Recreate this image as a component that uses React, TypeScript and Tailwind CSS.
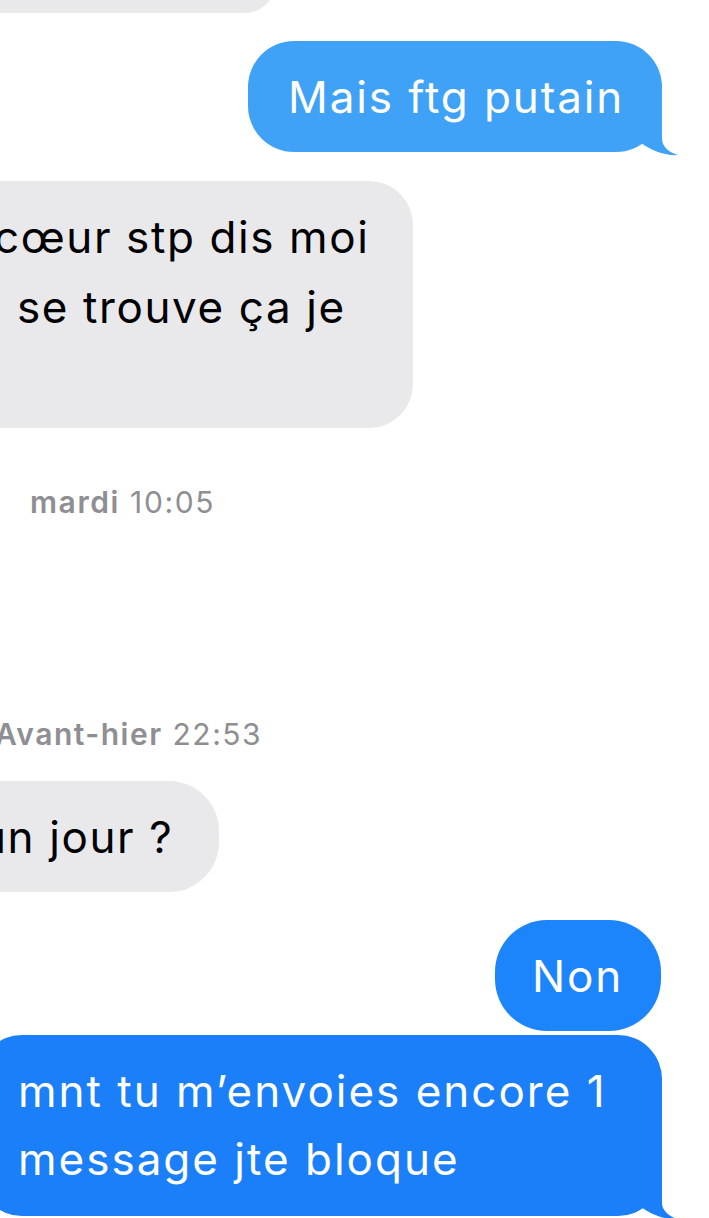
function Tail({ color }: { color: string }) {
  return (
    <svg
      className="absolute right-[-18px] bottom-[-5px]"
      width="60"
      height="62"
      viewBox="0 0 60 62"
    >
      <path
        d="M15 5 L42 5 L42 44 C42 52 50 58 58 60 C48 61 32 57 20 47 L15 40 Z"
        fill={color}
      />
    </svg>
  );
}

export default function App() {
  return (
    <div
      className="w-[709px] h-[1218px] overflow-hidden bg-white flex flex-col"
      style={{ fontFamily: 'Inter, "Noto Sans", sans-serif' }}
    >
      {/* bottom of an earlier received bubble */}
      <div className="h-[60px] -mt-[47px] w-[315px] -ml-[40px] rounded-[44px] bg-[#e9e9eb] shrink-0" />

      {/* sent */}
      <div className="self-end mr-[47px] mt-[28px] relative shrink-0">
        <div className="w-[414px] h-[111px] rounded-[46px] bg-[#3fa2f7] flex items-center pl-[40px] text-white text-[44px] leading-none tracking-[1.9px]">
          Mais ftg putain
        </div>
        <Tail color="#3fa2f7" />
      </div>

      {/* received */}
      <div className="mt-[29px] -ml-[60px] w-[473px] h-[247px] rounded-[44px] bg-[#e9e9eb] pt-[21px] text-black text-[44px] leading-[70px] tracking-[1.6px] shrink-0">
        <div className="pl-[54px]">cœur stp dis moi</div>
        <div className="pl-[77px]">se trouve ça je</div>
      </div>

      <div className="mt-[56px] pl-[30px] text-[30px] leading-[36px] text-[#8e8e93] tracking-[1.6px]">
        <span className="font-semibold">mardi</span> 10:05
      </div>

      <div className="mt-[196px] -ml-[5px] text-[30px] leading-[36px] text-[#8e8e93] tracking-[1.5px]">
        <span className="font-semibold">Avant-hier</span> 22:53
      </div>

      <div className="mt-[29px] -ml-[60px] w-[279px] h-[111px] rounded-[50px] bg-[#e9e9eb] flex items-center pl-[40px] text-black text-[44px] leading-none tracking-[1.6px] shrink-0">
        un jour ?
      </div>

      <div className="self-end mr-[48px] mt-[28px] w-[166px] h-[111px] rounded-[52px] bg-[#1d85fb] flex items-center pl-[37px] text-white text-[44px] leading-none tracking-[1.9px] shrink-0">
        Non
      </div>

      <div className="self-start -ml-[22px] mt-[4px] relative shrink-0">
        <div className="w-[684px] h-[181px] rounded-[44px] bg-[#1b7ff9] pl-[40px] pt-[22px] text-white text-[44px] leading-[68px] tracking-[2px]">
          <div>mnt tu m’envoies encore 1</div>
          <div>message jte bloque</div>
        </div>
        <Tail color="#1b7ff9" />
      </div>
    </div>
  );
}
